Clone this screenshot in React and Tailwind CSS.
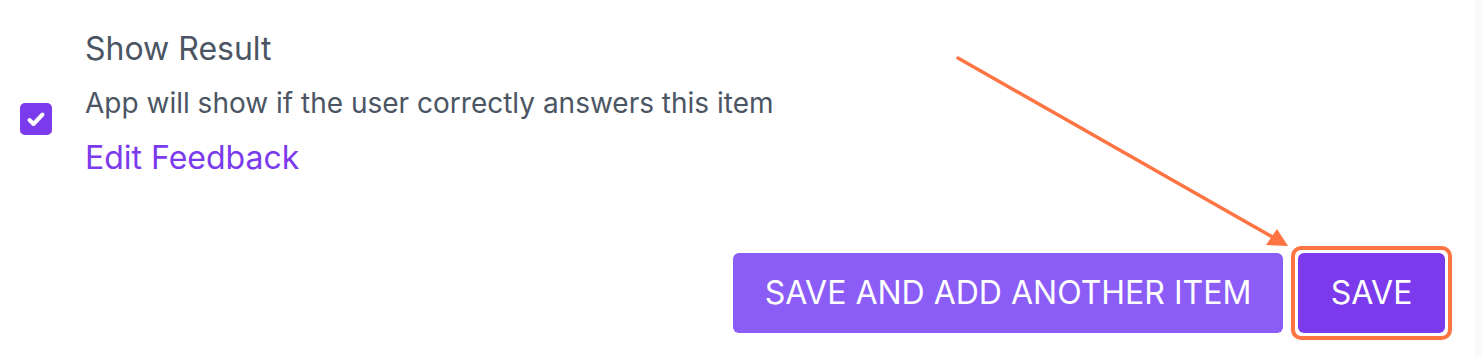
function Arrow() {
  return (
    <svg className="absolute inset-0 pointer-events-none" width="1482" height="357" viewBox="0 0 1482 357">
      <line x1="958" y1="58" x2="1276" y2="239" stroke="#ff7443" strokeWidth="3.5" strokeLinecap="round" />
      <polygon points="1288,246 1266,245 1277,229" fill="#ff7443" />
    </svg>
  );
}

export default function App() {
  return (
    <div className="relative flex h-[357px] w-[1482px] bg-white font-['Inter',sans-serif] overflow-hidden">
      <div className="flex flex-1 flex-col">
        {/* option */}
        <div className="flex items-start pt-[29px] pl-[20px]">
          <div className="w-8 h-8 mt-[74px] rounded-[5px] bg-[#7c3aed]">
            <svg width="32" height="32" viewBox="0 0 32 32" fill="none">
              <polyline points="9.5,17 13.5,21 22.5,11.5" stroke="white" strokeWidth="4" strokeLinecap="round" strokeLinejoin="round" />
            </svg>
          </div>
          <div className="ml-[33px] text-[#4b5563]">
            <div className="text-[32px] leading-10">Show Result</div>
            <div className="text-[28px] leading-10 mt-[14px]">App will show if the user correctly answers this item</div>
            <a href="#" className="block text-[32px] leading-10 mt-[15px] text-[#7c3aed]">Edit Feedback</a>
          </div>
        </div>

        {/* actions */}
        <div className="mt-auto mb-[17px] flex items-center justify-end gap-2 pr-[23px]">
          <button className="w-[550px] h-20 rounded-md bg-[#8b5cf6] text-white text-[32px] uppercase">
            Save and add another item
          </button>
          <div className="rounded-[10px] border-4 border-[#ff7443] p-[3px]">
            <button className="w-[147px] h-20 rounded-md bg-[#7c3aed] text-white text-[32px] uppercase">
              Save
            </button>
          </div>
        </div>
      </div>
      <div className="w-[7px] bg-gray-50" />
      <Arrow />
    </div>
  );
}
